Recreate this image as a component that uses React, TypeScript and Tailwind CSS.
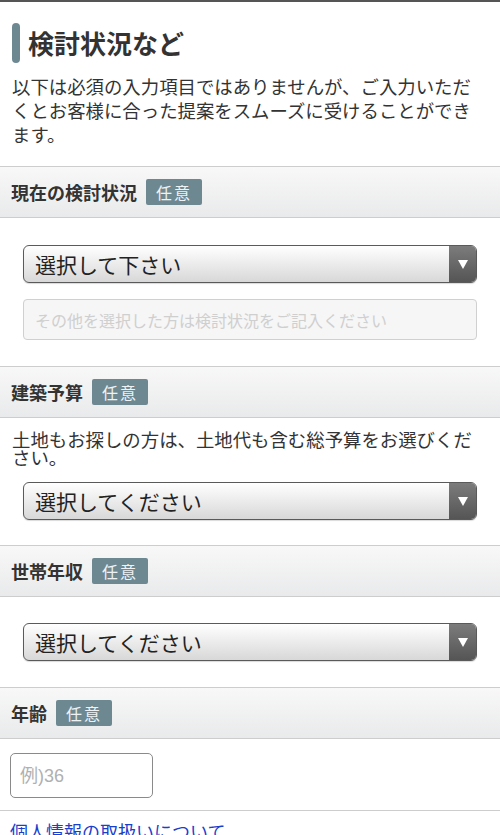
import React from "react";

function Badge() {
  return (
    <span className="ml-[9px] inline-flex h-[26px] w-[56px] items-center justify-center rounded-[2px] bg-[#6e8892] text-[16px] leading-none tracking-[2px] text-[#eef2f4]">
      任意
    </span>
  );
}

function SectionHeader({ label }: { label: string }) {
  return (
    <div className="flex h-[52px] items-center border-y border-[#cdcdcd] bg-linear-to-b from-[#f8f8f8] to-[#e9eaeb] pl-[11px]">
      <span className="text-[18px] font-bold leading-none text-[#333]">{label}</span>
      <Badge />
    </div>
  );
}

function Select({ text }: { text: string }) {
  return (
    <div className="flex h-[38px] overflow-hidden rounded-[6px] border border-[#5a5a5a] bg-linear-to-b from-white to-[#d8d8d8] shadow-[0_1px_1px_rgba(0,0,0,0.15)]">
      <div className="flex flex-1 items-center pl-[11px] text-[21px] leading-none text-[#222]">{text}</div>
      <div className="flex w-[27px] items-center justify-center bg-linear-to-b from-[#7c7c7c] to-[#555]">
        <svg width="10" height="9" viewBox="0 0 10 9">
          <polygon points="0,0 10,0 5,9" fill="#ffffff" />
        </svg>
      </div>
    </div>
  );
}

export default function App() {
  return (
    <div className="w-[500px] h-[835px] overflow-hidden bg-white font-['Noto_Sans_CJK_JP','Noto_Sans',sans-serif] text-[#333]">
      <div className="h-[2px] bg-[#555]" />
      <div className="mt-[21px] flex items-center pl-[12px]">
        <div className="h-[40px] w-[8px] rounded-full bg-[#6e8892]" />
        <h1 className="ml-[8px] text-[26px] font-bold leading-[40px] text-[#333]">検討状況など</h1>
      </div>
      <p className="mt-[11px] mb-[20px] pl-[12px] pr-[8px] text-[18.4px] leading-[24px] text-[#333]">
        以下は必須の入力項目ではありませんが、ご入力いただ
        <br />
        くとお客様に合った提案をスムーズに受けることができ
        <br />
        ます。
      </p>

      <SectionHeader label="現在の検討状況" />
      <div className="flex flex-col px-[23px] pt-[27px] pb-[26px]">
        <Select text="選択して下さい" />
        <div className="mt-[16px] flex h-[41px] items-center rounded-[4px] border border-[#d0d0d0] bg-[#f6f6f6] pl-[11px] text-[16px] leading-none text-[#cfcfcf]">
          その他を選択した方は検討状況をご記入ください
        </div>
      </div>

      <SectionHeader label="建築予算" />
      <div className="px-[12px] pt-[12px] pb-[25px]">
        <p className="pr-[8px] text-[18.4px] leading-[18px] text-[#333]">
          土地もお探しの方は、土地代も含む総予算をお選びください。
        </p>
        <div className="mt-[16px] px-[11px]">
          <Select text="選択してください" />
        </div>
      </div>

      <SectionHeader label="世帯年収" />
      <div className="px-[23px] pt-[26px] pb-[26px]">
        <Select text="選択してください" />
      </div>

      <SectionHeader label="年齢" />
      <div className="border-b border-[#cdcdcd] px-[10px] pt-[14px] pb-[12px]">
        <div className="flex h-[45px] w-[143px] items-center rounded-[5px] border-[1.5px] border-[#8a8a8a] pl-[9px] font-['Liberation_Sans','Noto_Sans_CJK_JP',sans-serif] text-[18px] leading-none text-[#b0b0b0]">
          例)36
        </div>
      </div>
      <div className="px-[10px] pt-[8px]">
        <a className="text-[18px] leading-[24px] text-[#1a3fcc] underline">個人情報の取扱いについて</a>
      </div>
    </div>
  );
}
